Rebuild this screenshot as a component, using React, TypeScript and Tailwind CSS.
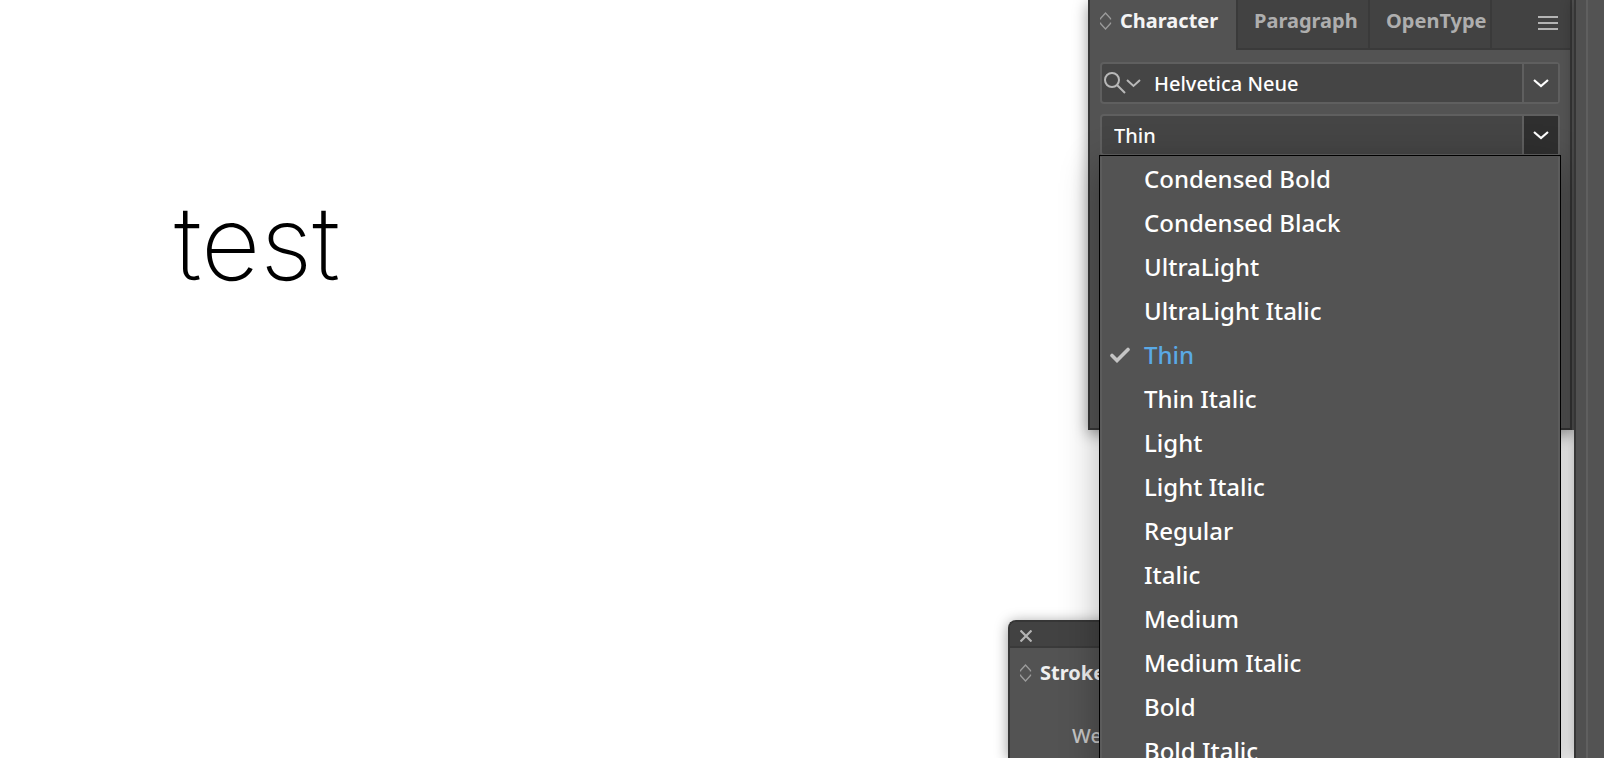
import { useState } from "react";

const fontStyles = [
  "Condensed Bold",
  "Condensed Black",
  "UltraLight",
  "UltraLight Italic",
  "Thin",
  "Thin Italic",
  "Light",
  "Light Italic",
  "Regular",
  "Italic",
  "Medium",
  "Medium Italic",
  "Bold",
  "Bold Italic",
];

function CollapseIcon() {
  return (
    <svg
      width="12"
      height="18"
      viewBox="0 0 12 18"
      fill="none"
      stroke="#9c9c9c"
      strokeWidth="1.3"
      aria-hidden="true"
    >
      <path d="M0.500 7.500V6.500L5.500 1L10.500 6.500V7.500M0.500 10.500V11.500L5.500 17L10.500 11.500V10.500" />
    </svg>
  );
}

function Chevron() {
  return (
    <svg
      width="16"
      height="10"
      viewBox="0 0 16 10"
      fill="none"
      stroke="#ffffff"
      strokeWidth="2.2"
      aria-hidden="true"
    >
      <path d="M1 2L8 8L15 2" />
    </svg>
  );
}

function StrokePanel() {
  return (
    <section
      aria-label="Stroke"
      className="absolute top-[620px] right-[60px] bottom-0 left-[1008px] rounded-tl-lg border-t-2 border-l-2 border-[#363636] bg-[#535353] shadow-[0_2px_14px_rgba(0,0,0,0.4)]"
    >
      <div className="flex h-[26px] items-center rounded-tl-md border-b-2 border-[#3a3a3a] bg-[#424242] pt-1 pl-2.5">
        <button aria-label="Close" className="flex">
          <svg
            width="12"
            height="12"
            viewBox="0 0 12 12"
            fill="none"
            stroke="#b4b4b4"
            strokeWidth="2.2"
            aria-hidden="true"
          >
            <path d="M0.500 0.500L11.500 11.500M11.500 0.500L0.500 11.500" />
          </svg>
        </button>
      </div>
      <div className="flex h-[50px] items-center gap-2 pl-2.5">
        <CollapseIcon />
        <h2 className="text-[20px] font-bold text-[#f0f0f0]">Stroke</h2>
      </div>
      <p className="pt-6 pl-[62px] text-[20px] leading-7 font-medium text-[#c6c6c6]">Weight:</p>
    </section>
  );
}

function StyleMenu({ value, onSelect }: { value: string; onSelect: (s: string) => void }) {
  return (
    <ul
      role="listbox"
      aria-label="Font style"
      className="absolute -right-px -left-px top-[41px] z-20 border border-black bg-[#535353] pt-px shadow-[0_10px_36px_rgba(0,0,0,0.3)]"
    >
      {fontStyles.map((name) => (
        <li key={name} role="option" aria-selected={name === value}>
          <button
            onClick={() => onSelect(name)}
            className={`flex h-[44px] w-full items-center border-x-2 border-[#5c5c5c] text-left text-[24px] font-medium ${
              name === value ? "text-[#5aa9e6]" : "text-white"
            }`}
          >
            <span className="flex w-[42px] pl-2">
              {name === value && (
                <svg
                  width="20"
                  height="16"
                  viewBox="0 0 20 16"
                  fill="none"
                  stroke="#c4c4c4"
                  strokeWidth="3.6"
                  strokeLinecap="round"
                  aria-hidden="true"
                >
                  <path d="M2 8.5L7 13.5L18 2.500" />
                </svg>
              )}
            </span>
            {name}
          </button>
        </li>
      ))}
    </ul>
  );
}

function CharacterPanel() {
  const [family, setFamily] = useState("Helvetica Neue");
  const [style, setStyle] = useState("Thin");
  const [open, setOpen] = useState(true);

  return (
    <section
      aria-label="Character"
      className="absolute top-0 right-0 z-10 h-[430px] w-[486px] bg-[#535353] pr-0.5 shadow-[0_4px_14px_rgba(0,0,0,0.4)]"
    >
      <div className="h-full border-x-2 border-b-2 border-[#363636] bg-[#535353]">
        <div role="tablist" className="flex h-[50px] text-[20px] font-bold">
          <button
            role="tab"
            aria-selected="true"
            className="flex w-[146px] items-center gap-2 pb-2 pl-2.5 text-[#f4f4f4]"
          >
            <CollapseIcon />
            Character
          </button>
          <div className="flex flex-1 border-b-2 border-l-2 border-[#3a3a3a] bg-[#424242] text-[#aeaeae]">
            <button role="tab" aria-selected="false" className="w-[132px] border-r-2 border-[#3a3a3a] pb-1.5 pl-4 text-left">
              Paragraph
            </button>
            <button role="tab" aria-selected="false" className="w-[122px] border-r-2 border-[#3a3a3a] pb-1.5 pl-4 text-left">
              OpenType
            </button>
            <button aria-label="Panel menu" className="ml-auto flex items-center pr-3 pb-0.5">
              <svg width="20" height="14" viewBox="0 0 20 14" fill="#b4b4b4" aria-hidden="true">
                <path d="M0 0H20V2H0ZM0 6H20V8H0ZM0 12H20V14H0Z" />
              </svg>
            </button>
          </div>
        </div>

        <div className="flex flex-col gap-2.5 pt-3 pr-2.5 pl-2.5 text-[20px] font-medium text-white">
          <div className="flex h-[42px] rounded-[4px] border-2 border-[#5f5f5f] bg-[#454545]">
            <label htmlFor="family" className="flex items-center pl-0.5" aria-label="Font family">
              <svg
                width="38"
                height="24"
                viewBox="0 0 38 24"
                fill="none"
                stroke="#b8b8b8"
                strokeWidth="2"
                aria-hidden="true"
              >
                <circle cx="8" cy="9" r="7" />
                <path d="M13 14L21 22M23 9L29.500 15L36 9" />
              </svg>
            </label>
            <input
              id="family"
              value={family}
              onChange={(e) => setFamily(e.target.value)}
              className="min-w-0 flex-1 bg-transparent pt-0.5 pl-3 outline-none"
            />
            <button
              aria-label="Show font families"
              className="flex w-9 items-center justify-center border-l-2 border-[#5f5f5f] bg-[#4a4a4a]"
            >
              <Chevron />
            </button>
          </div>

          <div className="relative">
            <div className="flex h-[42px] rounded-[4px] border-2 border-[#5f5f5f] bg-[#454545]">
              <input
                aria-label="Font style"
                value={style}
                onChange={(e) => setStyle(e.target.value)}
                className="min-w-0 flex-1 bg-transparent pt-0.5 pl-3 outline-none"
              />
              <button
                aria-label="Show font styles"
                aria-expanded={open}
                onClick={() => setOpen(!open)}
                className="flex w-9 items-center justify-center border-l-2 border-[#5f5f5f] bg-[#2f2f2f]"
              >
                <Chevron />
              </button>
            </div>
            {open && (
              <StyleMenu
                value={style}
                onSelect={(name) => {
                  setStyle(name);
                  setOpen(false);
                }}
              />
            )}
          </div>
        </div>
      </div>
    </section>
  );
}

export default function App() {
  return (
    <div className="flex h-screen overflow-hidden bg-white font-['Noto_Sans',sans-serif]">
      <main className="relative flex-1">
        <p className="pt-[171px] pl-[174px] font-['Inter',sans-serif] text-[103px] leading-[144px] font-extralight text-black">
          test
        </p>
        <StrokePanel />
        <CharacterPanel />
      </main>
      <aside className="z-10 flex w-[30px] border-l-2 border-[#363636] bg-[#535353] shadow-[0_0_14px_rgba(0,0,0,0.3)]">
        <div className="w-3 border-r-2 border-[#5f5f5f] bg-[#505050]" />
      </aside>
    </div>
  );
}
